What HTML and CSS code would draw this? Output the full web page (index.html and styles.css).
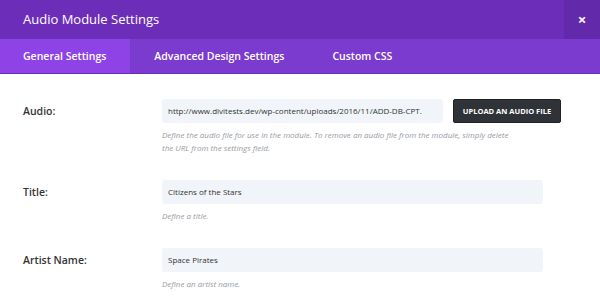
FILE: index.html
```html
<!DOCTYPE html>
<html>
<head>
  <title>Audio Module Settings</title>
  <link rel="stylesheet" href="styles.css">
</head>
<body>
  <div id="modal">
    <div id="header">
      <h1 id="title">Audio Module Settings</h1>
      <div id="close">&times;</div>
    </div>
    <div id="tabs">
      <div class="tab active">General Settings</div>
      <div class="tab">Advanced Design Settings</div>
      <div class="tab">Custom CSS</div>
    </div>
    <div id="content">
      <div class="row">
        <label class="label">Audio:</label>
        <div class="field">
          <div class="inline">
            <div class="input short">http://www.divitests.dev/wp-content/uploads/2016/11/ADD-DB-CPT.</div>
            <div class="upload">Upload an audio file</div>
          </div>
          <p class="desc">Define the audio file for use in the module. To remove an audio file from the module, simply delete the URL from the settings field.</p>
        </div>
      </div>
      <div class="row">
        <label class="label">Title:</label>
        <div class="field">
          <div class="input">Citizens of the Stars</div>
          <p class="desc">Define a title.</p>
        </div>
      </div>
      <div class="row">
        <label class="label">Artist Name:</label>
        <div class="field">
          <div class="input">Space Pirates</div>
          <p class="desc">Define an artist name.</p>
        </div>
      </div>
    </div>
  </div>
</body>
</html>
```

FILE: styles.css
```css
html, body {
  margin: 0;
  padding: 0;
  width: 600px;
  height: 308px;
  overflow: hidden;
  background: #fff;
  font-family: "Open Sans", "Liberation Sans", sans-serif;
}

#modal {
  width: 600px;
}

#header {
  display: flex;
  align-items: stretch;
  height: 39px;
  background-color: #6c2eb9;
}

#title {
  flex: 1;
  margin: 0;
  padding-left: 23px;
  font-size: 13px;
  font-weight: 400;
  line-height: 39px;
  color: #fff;
}

#close {
  width: 36px;
  text-align: center;
  line-height: 38px;
  font-size: 15px;
  font-weight: 700;
  color: #fff;
  background-color: #6229ab;
}

#tabs {
  display: flex;
  height: 34px;
  background-color: #7c3bcf;
  border-bottom: 1px solid #6a2cb8;
}

.tab {
  padding: 0 24px 0 24px;
  line-height: 34px;
  font-size: 10.5px;
  font-weight: 600;
  color: #fff;
}

.tab.active {
  padding-left: 23px;
  background-color: #8e43e7;
}

#content {
  padding: 25px 0 0 23px;
}

.row {
  display: flex;
  margin-bottom: 26px;
}

.label {
  width: 139px;
  height: 24px;
  line-height: 24px;
  font-size: 10.5px;
  font-weight: 600;
  color: #333;
}

.field {
  width: 400px;
}

.inline {
  display: flex;
  gap: 10px;
}

.input {
  width: 375px;
  height: 24px;
  padding-left: 6px;
  line-height: 24px;
  font-size: 8px;
  color: #333;
  white-space: nowrap;
  overflow: hidden;
  background-color: #f1f5f9;
  border-radius: 3px;
}

.input.short {
  width: 275px;
}

.upload {
  width: 106px;
  height: 22px;
  line-height: 22px;
  text-align: center;
  font-size: 7.5px;
  font-weight: 700;
  text-transform: uppercase;
  color: #fff;
  background-color: #2f3337;
  border: 1px solid #1f2225;
  border-radius: 2px;
}

.desc {
  margin: 5px 0 0 0;
  width: 350px;
  font-size: 8px;
  font-style: italic;
  line-height: 13px;
  color: #969ba3;
}
```
